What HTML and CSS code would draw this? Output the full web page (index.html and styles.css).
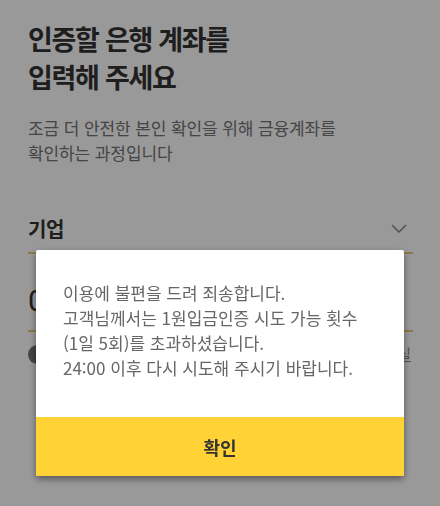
FILE: index.html
```html
<!DOCTYPE html>
<html lang="ko">
<head>
<meta charset="utf-8">
<title>계좌 인증</title>
<link rel="stylesheet" href="styles.css">
</head>
<body>
<main class="page">
  <h1 class="title">인증할 은행 계좌를<br>입력해 주세요</h1>
  <p class="desc">조금 더 안전한 본인 확인을 위해 금융계좌를<br>확인하는 과정입니다</p>

  <div class="field field-bank">
    <span class="bank">기업</span>
    <svg class="chev" width="16" height="9" viewBox="0 0 16 9"><path d="M1 1l7 7 7-7" fill="none" stroke="#8c8c8c" stroke-width="1.6"/></svg>
  </div>

  <div class="field field-acct">
    <span class="acct">0</span>
  </div>

  <div class="row">
    <span class="dot"></span>
    <a class="link">계좌번호 직접 입력하실</a>
  </div>
</main>

<div class="overlay">
  <div class="dialog">
    <p class="msg">이용에 불편을 드려 죄송합니다.<br>고객님께서는 1원입금인증 시도 가능 횟수<br>(1일 5회)를 초과하셨습니다.<br>24:00 이후 다시 시도해 주시기 바랍니다.</p>
    <button class="ok">확인</button>
  </div>
</div>
</body>
</html>
```

FILE: styles.css
```css
html, body {
  margin: 0;
  padding: 0;
  background: #fff;
  height: 100%;
  overflow: hidden;
  font-family: "Noto Sans CJK KR", "Noto Sans", sans-serif;
}

.page {
  padding: 20px 27px 0 28px;
}

.title {
  margin: 0;
  font-size: 27px;
  line-height: 38px;
  font-weight: 700;
  letter-spacing: -1.3px;
  color: #333;
}

.desc {
  margin: 19px 0 0;
  font-size: 17px;
  line-height: 25px;
  letter-spacing: -0.1px;
  color: #737373;
}

.field {
  display: flex;
  align-items: center;
  justify-content: space-between;
  border-bottom: 2px solid #e8ca72;
}

.field-bank {
  margin-top: 50px;
  padding-bottom: 9px;
  height: 28px;
}

.bank {
  font-size: 20px;
  line-height: 28px;
  font-weight: 700;
  color: #333;
  letter-spacing: -0.5px;
}

.chev {
  margin-right: 6px;
  margin-top: -1px;
}

.field-acct {
  margin-top: 29px;
  height: 36px;
  padding-bottom: 11px;
}

.acct {
  font-family: Roboto, "Noto Sans", sans-serif;
  font-size: 30px;
  line-height: 36px;
  color: #333;
}

.row {
  display: flex;
  align-items: center;
  justify-content: space-between;
  margin-top: 12px;
  height: 20px;
}

.dot {
  width: 19px;
  height: 19px;
  border-radius: 50%;
  background: #6c7279;
}

.link {
  font-size: 15px;
  line-height: 20px;
  color: #8a8a8a;
  text-decoration: underline;
  margin-right: 2px;
}

.overlay {
  position: fixed;
  inset: 0;
  background: rgba(0, 0, 0, 0.4);
  display: flex;
  flex-direction: column;
  align-items: center;
  padding-top: 250px;
}

.dialog {
  width: 368px;
  background: #fff;
  border-radius: 2px;
  overflow: hidden;
  box-shadow: 0 3px 7px rgba(0, 0, 0, 0.45);
}

.msg {
  margin: 0;
  padding: 30px 14px 37px 27px;
  font-size: 17px;
  line-height: 25px;
  letter-spacing: 0;
  color: #666;
}

.ok {
  display: block;
  width: 100%;
  height: 59px;
  border: 0;
  margin: 0;
  background: #ffd336;
  font-family: "Noto Sans CJK KR", "Noto Sans", sans-serif;
  font-size: 18px;
  font-weight: 700;
  color: #333;
}
```
